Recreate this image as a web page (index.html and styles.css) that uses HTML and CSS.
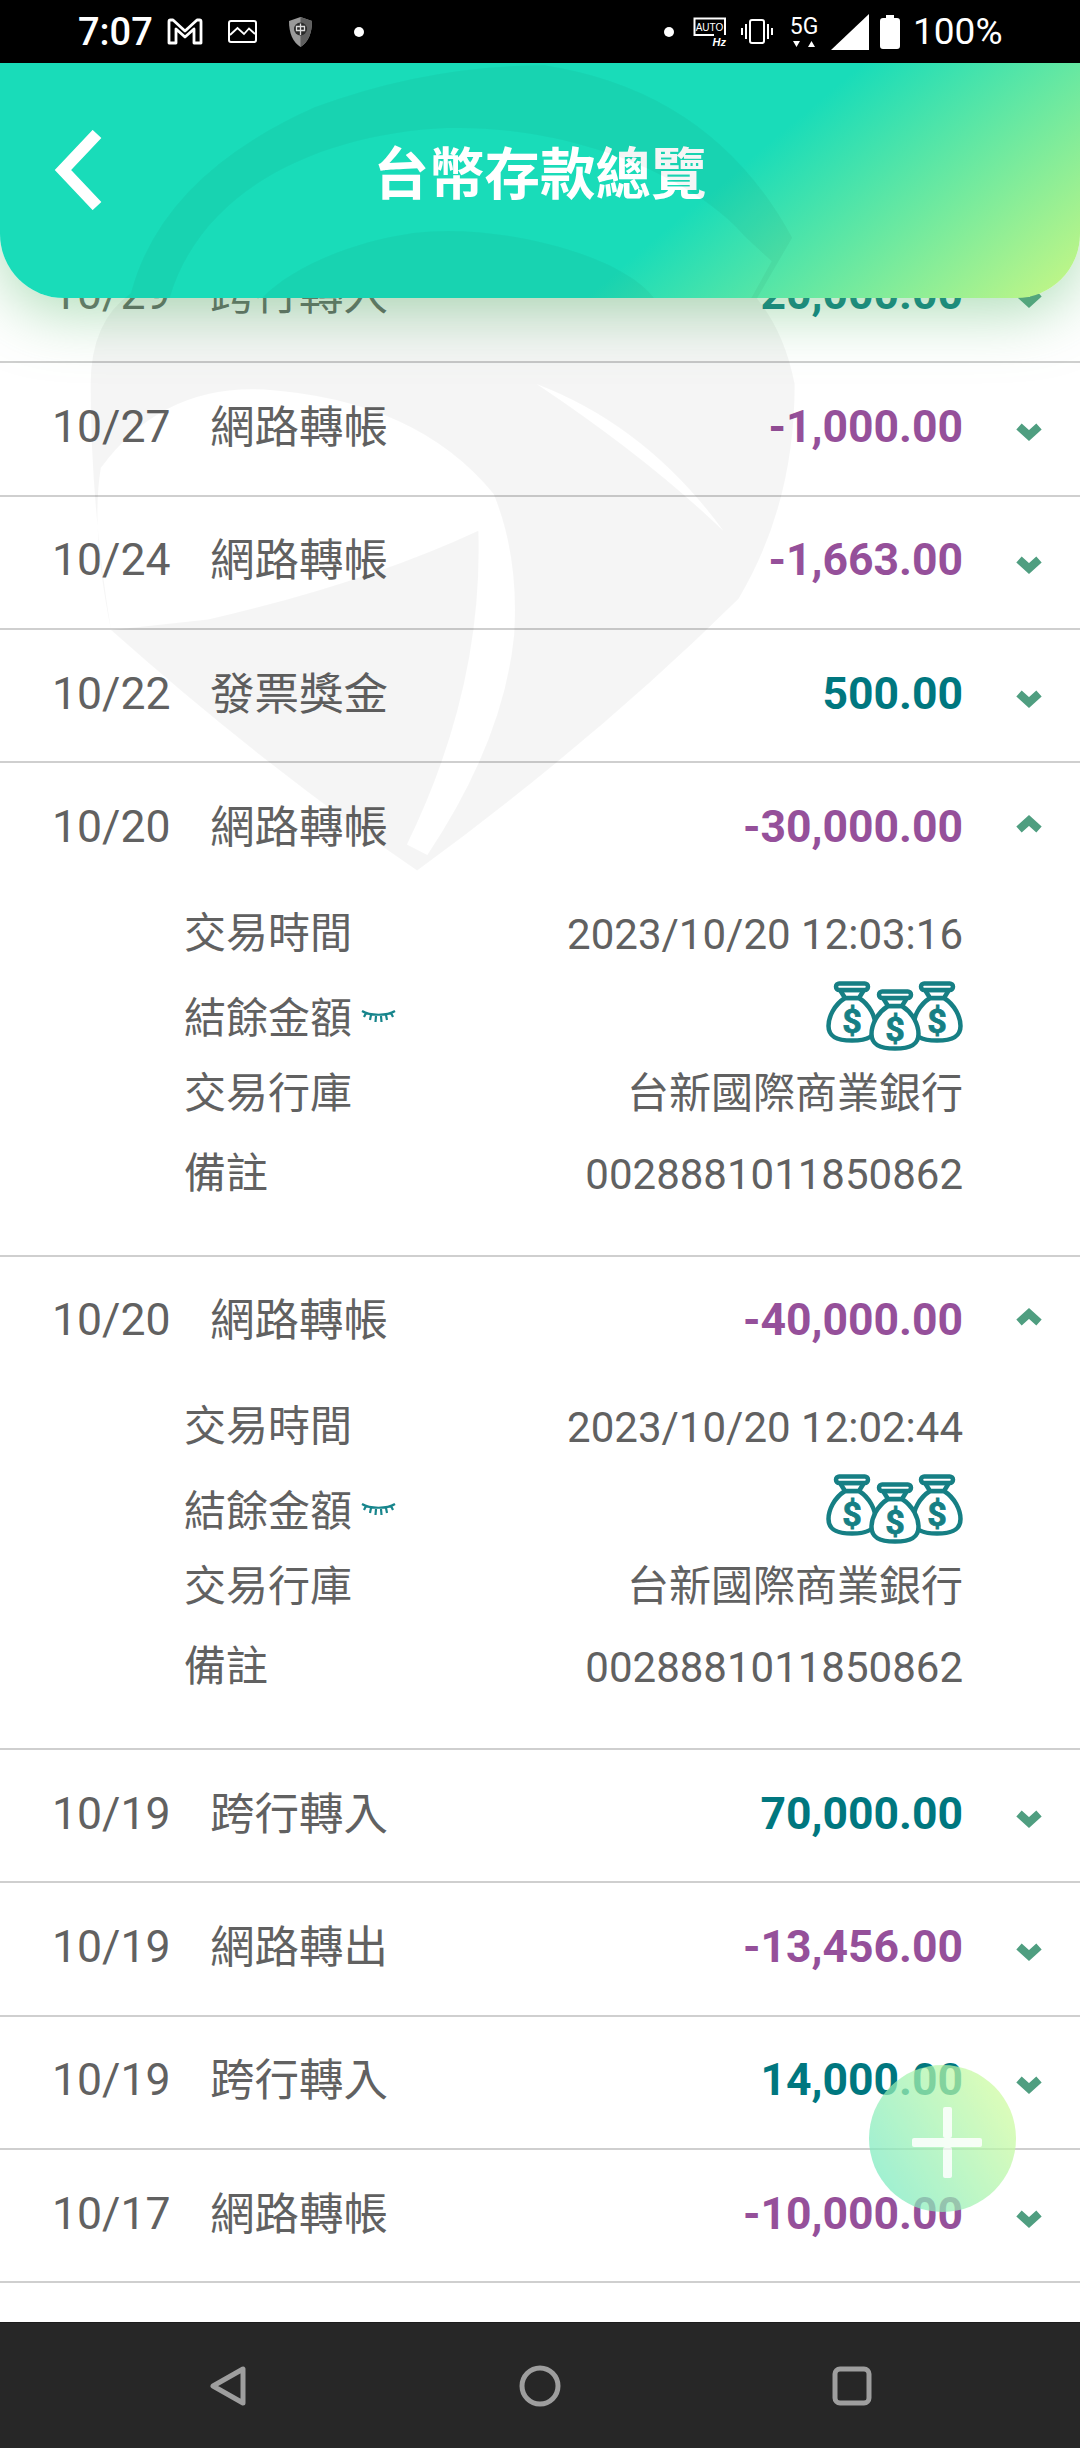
FILE: index.html
```html
<!DOCTYPE html>
<html>
<head>
	<meta charset="utf-8">
	<title>台幣存款總覽</title>
	<link rel="stylesheet" href="styles.css">
</head>
<body>

	<svg class="sprite">
		<symbol id="down" viewBox="0 0 26 18"><path d="M3 3.500 13 12.500 23 3.500" fill="none" stroke="currentColor" stroke-width="8"/></symbol>
		<symbol id="up" viewBox="0 0 26 18"><path d="M3 14.500 13 5.500 23 14.500" fill="none" stroke="currentColor" stroke-width="8"/></symbol>
		<symbol id="eye" viewBox="0 0 35 14">
			<path d="M1 2C9 7 26 7 34 2M5 4 3 8M10 6 9 11M15 7 14.500 13M20 7 20.500 13M25 6 26 11M30 4 32 8" fill="none" stroke="currentColor" stroke-width="2.200"/>
		</symbol>
		<symbol id="bag" viewBox="0 0 52 62">
			<path d="M19 17C8 24 2.500 36 2.500 45 2.500 56 11 59.500 26 59.500 41 59.500 49.500 56 49.500 45 49.500 36 44 24 33 17Z" fill="#fff" stroke="currentColor" stroke-width="4.500"/>
			<path d="M19 17 14 9H38L33 17Z" fill="#fff" stroke="currentColor" stroke-width="4.500"/>
			<rect x="10" y="2.500" width="32" height="6.500" rx="3.200" fill="#fff" stroke="currentColor" stroke-width="4.500"/>
			<text x="26" y="52" text-anchor="middle" class="bag-sign">$</text>
		</symbol>
		<symbol id="bags" viewBox="0 0 137 70">
			<use href="#bag" x="0" y="0" width="52" height="62"/>
			<use href="#bag" x="85" y="0" width="52" height="62"/>
			<use href="#bag" x="43" y="8" width="52" height="62"/>
		</symbol>
	</svg>

	<div class="phone">

		<div class="statusbar">
			<span class="clock">7:07</span>
			<svg class="st-gmail" viewBox="0 0 36 27"><path d="M2 25V3.500Q2 2 3.500 2H6L18 13 30 2H32.500Q34 2 34 3.500V25H27V11L18 19 9 11V25Z" fill="none" stroke="#fff" stroke-width="2.800" stroke-linejoin="round"/></svg>
			<svg class="st-image" viewBox="0 0 29 23"><rect x="1" y="1" width="27" height="21" rx="2" fill="none" stroke="#fff" stroke-width="2"/><path d="M2 15 9.500 8 16 14 21 8.500 27 14" fill="none" stroke="#fff" stroke-width="1.800"/></svg>
			<svg class="st-shield" viewBox="0 0 23 30"><path d="M11.500 0 23 4C23 17 19 25 11.500 30 4 25 0 17 0 4Z" fill="#9a9a9a"/><path d="M11.500 0 23 4C23 17 19 25 11.500 30Z" fill="#5f5f5f"/><circle cx="11.500" cy="12" r="6.500" fill="#2a2a2a"/><path d="M7.500 9.500H15.500V13.500H7.500ZM11.500 6.500V18" fill="none" stroke="#ddd" stroke-width="1.300"/></svg>
			<span class="st-dot"></span>
			<span class="st-gap"></span>
			<span class="st-dot"></span>
			<svg class="st-auto" viewBox="0 0 34 30"><path d="M32 18V1.500H1.500V18H21" fill="none" stroke="#fff" stroke-width="2"/><text x="16.500" y="13.500" text-anchor="middle" class="st-auto-text">AUTO</text><text x="33" y="29" text-anchor="end" class="st-hz-text">Hz</text></svg>
			<svg class="st-vibrate" viewBox="0 0 32 25"><rect x="9" y="1" width="14" height="23" rx="2" fill="none" stroke="#fff" stroke-width="2"/><path d="M1 9V16M5 5V20M27 5V20M31 9V16" fill="none" stroke="#fff" stroke-width="2"/></svg>
			<div class="st-net">
				<span>5G</span>
				<svg viewBox="0 0 22 6"><path d="M0 0H7L3.500 6ZM18.500 0 22 6H15Z" fill="#fff"/></svg>
			</div>
			<svg class="st-signal" viewBox="0 0 38 36"><path d="M38 0V36H0Z" fill="#fff"/></svg>
			<svg class="st-battery" viewBox="0 0 20 34"><path d="M6 0H14V3H17Q20 3 20 6V31Q20 34 17 34H3Q0 34 0 31V6Q0 3 3 3H6Z" fill="#fff"/></svg>
			<span class="st-percent">100%</span>
		</div>

		<header class="topbar">
			<svg class="back" viewBox="0 0 48 80"><path d="M43 4 9 40 43 76" fill="none" stroke="#fff" stroke-width="12"/></svg>
			<h1>台幣存款總覽</h1>
		</header>

		<div class="list">

			<div class="row">
				<div class="row-head"><span class="date">10/29</span><span class="name">跨行轉入</span><span class="amount in">20,000.00</span><svg class="arrow"><use href="#down"/></svg></div>
			</div>
			<div class="row">
				<div class="row-head"><span class="date">10/27</span><span class="name">網路轉帳</span><span class="amount out">-1,000.00</span><svg class="arrow"><use href="#down"/></svg></div>
			</div>
			<div class="row">
				<div class="row-head"><span class="date">10/24</span><span class="name">網路轉帳</span><span class="amount out">-1,663.00</span><svg class="arrow"><use href="#down"/></svg></div>
			</div>
			<div class="row">
				<div class="row-head"><span class="date">10/22</span><span class="name">發票獎金</span><span class="amount in">500.00</span><svg class="arrow"><use href="#down"/></svg></div>
			</div>

			<div class="row open">
				<div class="row-head"><span class="date">10/20</span><span class="name">網路轉帳</span><span class="amount out">-30,000.00</span><svg class="arrow arrow-up"><use href="#up"/></svg></div>
				<div class="detail">
					<div class="detail-row"><span class="cjk">交易時間</span><span>2023/10/20 12:03:16</span></div>
					<div class="detail-row"><span class="balance">結餘金額<svg class="eye"><use href="#eye"/></svg></span><svg class="bags"><use href="#bags"/></svg></div>
					<div class="detail-row"><span class="cjk">交易行庫</span><span class="cjk">台新國際商業銀行</span></div>
					<div class="detail-row"><span class="cjk">備註</span><span>0028881011850862</span></div>
				</div>
			</div>

			<div class="row open">
				<div class="row-head"><span class="date">10/20</span><span class="name">網路轉帳</span><span class="amount out">-40,000.00</span><svg class="arrow arrow-up"><use href="#up"/></svg></div>
				<div class="detail">
					<div class="detail-row"><span class="cjk">交易時間</span><span>2023/10/20 12:02:44</span></div>
					<div class="detail-row"><span class="balance">結餘金額<svg class="eye"><use href="#eye"/></svg></span><svg class="bags"><use href="#bags"/></svg></div>
					<div class="detail-row"><span class="cjk">交易行庫</span><span class="cjk">台新國際商業銀行</span></div>
					<div class="detail-row"><span class="cjk">備註</span><span>0028881011850862</span></div>
				</div>
			</div>

			<div class="row">
				<div class="row-head"><span class="date">10/19</span><span class="name">跨行轉入</span><span class="amount in">70,000.00</span><svg class="arrow"><use href="#down"/></svg></div>
			</div>
			<div class="row">
				<div class="row-head"><span class="date">10/19</span><span class="name">網路轉出</span><span class="amount out">-13,456.00</span><svg class="arrow"><use href="#down"/></svg></div>
			</div>
			<div class="row">
				<div class="row-head"><span class="date">10/19</span><span class="name">跨行轉入</span><span class="amount in">14,000.00</span><svg class="arrow"><use href="#down"/></svg></div>
			</div>
			<div class="row">
				<div class="row-head"><span class="date">10/17</span><span class="name">網路轉帳</span><span class="amount out">-10,000.00</span><svg class="arrow"><use href="#down"/></svg></div>
			</div>

		</div>

		<nav class="navbar">
			<svg viewBox="0 0 38 42"><path d="M34 4V38L4 21Z" fill="none" stroke="#9e9e9e" stroke-width="5" stroke-linejoin="round"/></svg>
			<svg viewBox="0 0 42 42"><circle cx="21" cy="21" r="18" fill="none" stroke="#9e9e9e" stroke-width="5"/></svg>
			<svg viewBox="0 0 42 42"><rect x="4" y="4" width="34" height="34" rx="5" fill="none" stroke="#9e9e9e" stroke-width="5"/></svg>
		</nav>

		<svg class="watermark" viewBox="0 0 1568 1568" preserveAspectRatio="none">
			<path fill-rule="evenodd" d="M100 1090Q60 850 60 620Q60 500 139 446Q200 220 500 90Q720 10 950 10Q1280 60 1435 340L1366 456Q1420 520 1440 620Q1440 850 1330 1030Q1050 1300 700 1550Q400 1350 100 1090Z
				M80 780Q200 620 400 630Q700 650 850 830Q900 950 890 1100Q870 1300 720 1520L680 1500Q830 1200 820 900Q600 1000 290 1070L100 1090Q60 900 80 780Z
				M935 620Q1150 700 1300 900Q1150 760 935 620Z
				M215 455C280 240 520 140 760 130C1000 125 1240 220 1345 340L1395 385 1355 455H1164C1100 370 850 310 692 331C560 350 450 400 396 455Z"/>
		</svg>

		<div class="fab">
			<span class="fab-h"></span>
			<span class="fab-v"></span>
		</div>

	</div>

</body>
</html>
```

FILE: styles.css
```css
body{
	margin: 0;
	font-family: Roboto, "Noto Sans CJK TC", sans-serif;
}

.sprite{
	display: none;
}

.bag-sign{
	font: 700 34px Roboto, sans-serif;
	fill: currentColor;
	stroke: currentColor;
	stroke-width: .8px;
}

.phone{
	position: relative;
	width: 1080px;
	height: 2448px;
	overflow: hidden;
	display: flex;
	flex-direction: column;
	background: #fff;
}

/* status bar */
.statusbar{
	height: 63px;
	flex: none;
	background: #000;
	color: #fff;
	display: flex;
	align-items: center;
	padding-left: 78px;
	position: relative;
	z-index: 3;
}

.clock{
	font-size: 38px;
	font-weight: 500;
	width: 72px;
}

.statusbar svg{
	flex: none;
}

.st-gmail{
	width: 36px;
	height: 27px;
	margin-left: 17px;
}

.st-image{
	width: 29px;
	height: 23px;
	margin-left: 25px;
}

.st-shield{
	width: 23px;
	height: 30px;
	margin-left: 32px;
}

.st-dot{
	width: 10px;
	height: 10px;
	border-radius: 50%;
	background: #fff;
	flex: none;
}

.st-shield + .st-dot{
	margin-left: 42px;
}

.st-gap{
	width: 300px;
	flex: none;
}

.st-auto{
	width: 34px;
	height: 30px;
	margin-left: 19px;
}

.st-auto-text{
	font: 500 10px "Liberation Sans", sans-serif;
	fill: #fff;
}

.st-hz-text{
	font: italic 700 11px "Liberation Sans", sans-serif;
	fill: #fff;
}

.st-vibrate{
	width: 32px;
	height: 25px;
	margin-left: 14px;
}

.st-net{
	width: 28px;
	margin-left: 17px;
	display: flex;
	flex-direction: column;
	align-items: center;
	font-size: 23px;
	line-height: 22px;
}

.st-net svg{
	width: 22px;
	height: 6px;
	margin-top: 3px;
}

.st-signal{
	width: 38px;
	height: 36px;
	margin-left: 13px;
}

.st-battery{
	width: 20px;
	height: 34px;
	margin-left: 11px;
}

.st-percent{
	font-size: 37px;
	margin-left: 13px;
}

/* header */
.topbar{
	height: 235px;
	flex: none;
	box-sizing: border-box;
	padding-bottom: 22px;
	border-radius: 0 0 64px 64px;
	background: linear-gradient(140deg, #19dcb9 63.5%, #c9f784 100%);
	box-shadow: 0 14px 60px rgba(95, 190, 115, .5);
	display: flex;
	align-items: center;
	justify-content: center;
	position: relative;
	z-index: 2;
}

.topbar h1{
	margin: 0;
	color: #fff;
	font-size: 55.500px;
	font-weight: 700;
}

.back{
	position: absolute;
	left: 54px;
	top: 67px;
	width: 48px;
	height: 80px;
}

/* list */
.list{
	flex: 1;
	min-height: 0;
	margin-top: -68px;
	overflow: hidden;
}

.row{
	border-bottom: 2px solid #cfcfcf;
}

.row-head{
	height: 131.33px;
	box-sizing: border-box;
	padding: 0 38px 4px 52px;
	display: flex;
	align-items: center;
	font-size: 44.500px;
	color: #616161;
}

.date{
	width: 158px;
	flex: none;
}

.name{
	flex: 1;
	padding-bottom: 7px;
}

.amount{
	font-weight: 700;
}

.in{
	color: #00777f;
}

.out{
	color: #95509a;
}

.arrow{
	width: 26px;
	height: 18px;
	margin: 10px 0 0 53px;
	color: #4f9e80;
	flex: none;
}

.arrow-up{
	margin-top: -6px;
}

.detail{
	padding: 0 117px 40px 184px;
	font-size: 42px;
	color: #616161;
}

.detail-row{
	height: 80px;
	display: flex;
	align-items: center;
	justify-content: space-between;
}

.cjk{
	padding-bottom: 10px;
}

.balance{
	display: flex;
	align-items: center;
}

.eye{
	width: 35px;
	height: 14px;
	margin: 3px 0 0 9px;
	color: #17858c;
}

.bags{
	width: 137px;
	height: 70px;
	margin-top: 2px;
	color: #167f84;
}

/* nav */
.navbar{
	height: 126px;
	flex: none;
	background: #272727;
	border-top: 1px solid #1c1c1c;
	box-sizing: border-box;
	display: grid;
	grid-template-columns: repeat(3, 312px);
	justify-content: center;
	align-items: center;
	justify-items: center;
}

.navbar svg{
	width: 42px;
	height: 42px;
}

/* overlays */
.watermark{
	position: absolute;
	left: 60px;
	top: 60px;
	width: 800px;
	height: 820px;
	fill: rgba(0, 0, 0, .04);
	z-index: 2;
	pointer-events: none;
}

.fab{
	position: absolute;
	left: 869px;
	top: 2065px;
	width: 147px;
	height: 147px;
	border-radius: 50%;
	background: linear-gradient(60deg, #6fe8c6, #dcff9a);
	opacity: .72;
	z-index: 2;
}

.fab-h, .fab-v{
	position: absolute;
	background: rgba(255, 255, 255, .85);
	border-radius: 2px;
}

.fab-h{
	left: 43px;
	top: 73px;
	width: 70px;
	height: 9px;
}

.fab-v{
	left: 74px;
	top: 42px;
	width: 9px;
	height: 31px;
	box-shadow: 0 40px 0 rgba(255, 255, 255, .85);
}
```
